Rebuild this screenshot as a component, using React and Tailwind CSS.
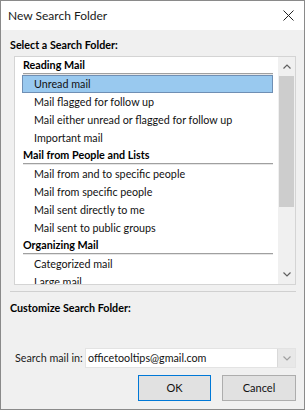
import React from "react";

const font = { fontFamily: 'Lato, "Open Sans", sans-serif' };

function Header({ children }) {
  return (
    <div className="h-[18px] pl-[8px] pr-[5px] flex flex-col">
      <div className="h-[16px] leading-[16px] font-bold text-black">{children}</div>
      <div className="h-[2px] border-t border-[#a0a0a0] border-b border-b-[#e6e6e6]" />
    </div>
  );
}

function Item({ children, selected }) {
  return (
    <div className="h-[18px] pl-[7px] pr-[5px]">
      <div
        className={
          "h-[18px] leading-[16px] pl-[11px] border " +
          (selected ? "bg-[#99c9ef] border-[#6f8fb4]" : "border-transparent")
        }
      >
        {children}
      </div>
    </div>
  );
}

function Chevron({ up, className }) {
  return (
    <svg width="8" height="5" viewBox="0 0 8 5" className={className}>
      <path
        d={up ? "M0.5 4.5 L4 1 L7.5 4.5" : "M0.5 0.5 L4 4 L7.5 0.5"}
        fill="none"
        stroke="currentColor"
        strokeWidth="1.2"
      />
    </svg>
  );
}

export default function App() {
  return (
    <div
      className="w-[305px] h-[410px] border border-[#8a8a8a] bg-[#f0f0f0] text-[10.75px] text-[#111] flex flex-col overflow-hidden"
      style={font}
    >
      <div className="h-[29px] bg-white flex items-center justify-between pl-[7px] pr-[10px] shrink-0">
        <span className="text-[12px] text-[#1a1a1a]">New Search Folder</span>
        <svg width="11" height="11" viewBox="0 0 11 11">
          <path d="M0.5 0.5 L10.5 10.5 M10.5 0.5 L0.5 10.5" stroke="#222" strokeWidth="1" fill="none" />
        </svg>
      </div>

      <div className="h-[26px] pt-[7px] pl-[9px] font-bold leading-[16px] text-black shrink-0">
        Select a Search Folder:
      </div>

      <div className="ml-[13px] mr-[8px] h-[229px] border border-[#d4d4d4] bg-white flex shrink-0 overflow-hidden">
        <div className="flex-1 overflow-hidden">
          <Header>Reading Mail</Header>
          <Item selected>Unread mail</Item>
          <Item>Mail flagged for follow up</Item>
          <Item>Mail either unread or flagged for follow up</Item>
          <Item>Important mail</Item>
          <Header>Mail from People and Lists</Header>
          <Item>Mail from and to specific people</Item>
          <Item>Mail from specific people</Item>
          <Item>Mail sent directly to me</Item>
          <Item>Mail sent to public groups</Item>
          <Header>Organizing Mail</Header>
          <Item>Categorized mail</Item>
          <Item>Large mail</Item>
        </div>
        <div className="w-[17px] bg-[#f0f0f0] flex flex-col">
          <div className="h-[19px] flex items-center justify-center text-[#606060]">
            <Chevron up />
          </div>
          <div className="h-[131px] mx-[1px] bg-[#cdcdcd]" />
          <div className="flex-1" />
          <div className="h-[19px] flex items-center justify-center text-[#606060]">
            <Chevron />
          </div>
        </div>
      </div>

      <div className="mt-[6px] ml-[9px] mr-[8px] h-[1px] bg-[#d0d0d0] shrink-0" />

      <div className="mt-[8px] pl-[9px] font-bold leading-[16px] h-[16px] text-black shrink-0">
        Customize Search Folder:
      </div>

      <div className="mt-[32px] flex items-center pl-[14px] pr-[8px] h-[20px] shrink-0">
        <span className="w-[70px] whitespace-nowrap leading-[16px] text-[#1a1a1a]">Search mail in:</span>
        <div className="flex-1 h-[20px] border border-[#e3e3e3] bg-white flex">
          <div className="flex-1 pl-[2px] leading-[18px] whitespace-nowrap">officetooltips@gmail.com</div>
          <div className="w-[18px] bg-[#e8e8e8] border-l border-[#d9d9d9] flex items-center justify-center text-[#a0a0a0]">
            <Chevron />
          </div>
        </div>
      </div>

      <div className="mt-[7px] flex justify-end gap-[11px] pr-[8px] shrink-0">
        <div className="w-[73px] h-[26px] border border-[#0078d7] bg-[#e1e1e1] flex items-center justify-center text-[11px]">
          OK
        </div>
        <div className="w-[74px] h-[26px] border border-[#adadad] bg-[#e1e1e1] flex items-center justify-center text-[11px]">
          Cancel
        </div>
      </div>
    </div>
  );
}
